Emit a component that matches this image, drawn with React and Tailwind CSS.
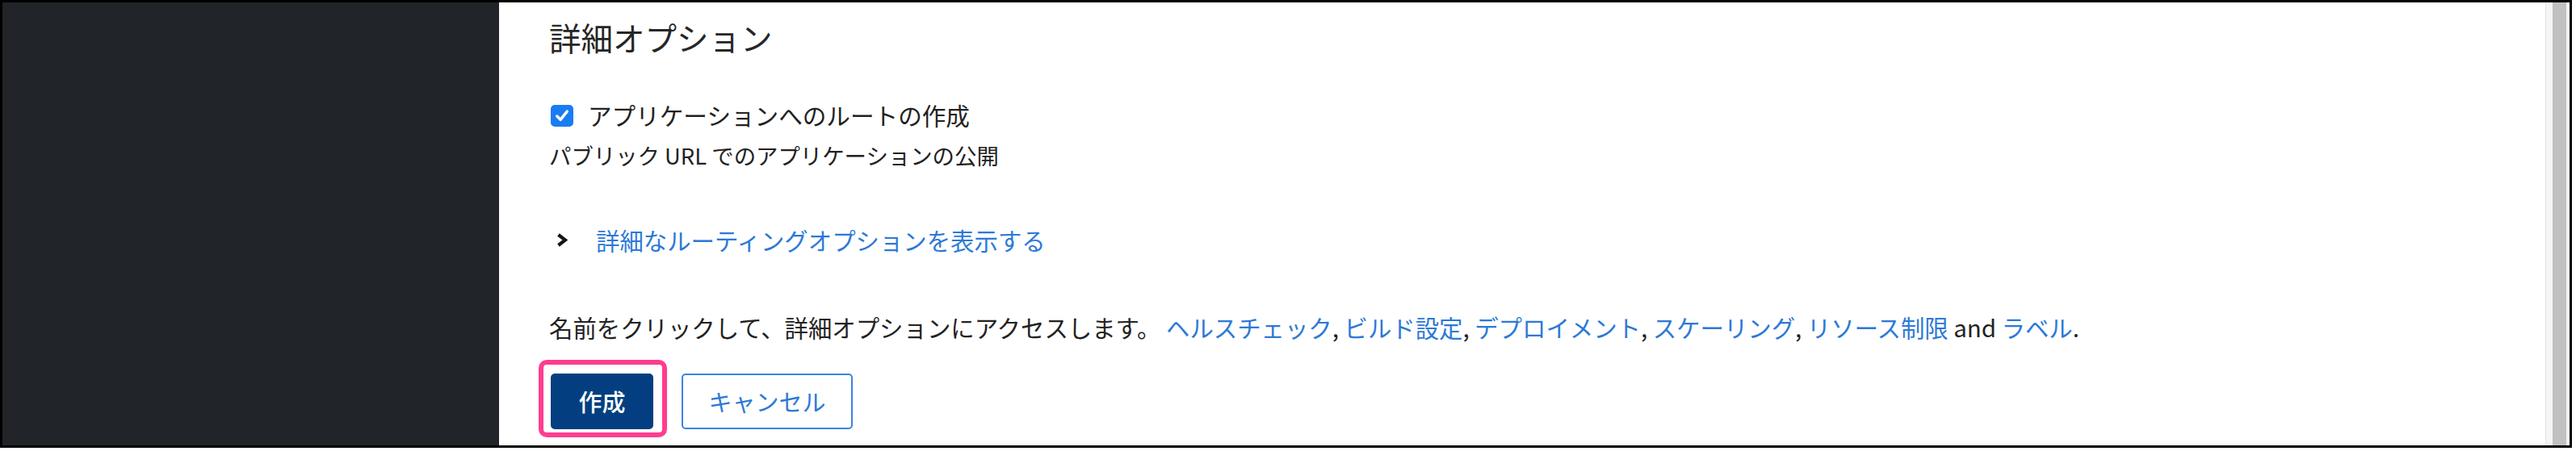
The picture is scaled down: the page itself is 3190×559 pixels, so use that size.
import React from 'react';

const font = { fontFamily: '"Noto Sans CJK JP", "Noto Sans", sans-serif' };

const Check = () => (
  <span className="flex h-[27px] w-[28px] items-center justify-center rounded-[5px] bg-[#1a7cf3]">
    <svg viewBox="0 0 28 28" className="h-[27px] w-[28px]">
      <polyline points="7.5,14.5 12,19 20.5,8.5" fill="none" stroke="#fff" strokeWidth="3.6" strokeLinecap="round" strokeLinejoin="round" />
    </svg>
  </span>
);

const Chevron = () => (
  <svg viewBox="0 0 14 17" className="h-[17px] w-[14px]">
    <polyline points="2.5,2 11,8.5 2.5,15" fill="none" stroke="#151515" strokeWidth="4.2" strokeLinejoin="miter" />
  </svg>
);

const links = ['ヘルスチェック', 'ビルド設定', 'デプロイメント', 'スケーリング'];

const App = () => {
  return (
    <div className="h-[559px] w-[3190px] bg-white" style={font}>
      <div className="flex h-[555px] w-[3185px] overflow-hidden border-[3px] border-black">
        <div className="w-[615px] shrink-0 bg-[#212428]" />

        <div className="flex-1 pl-[62px] pt-[19px] text-[#222]">
          <h2 className="text-[39.5px] leading-[47px] text-[#262626]">詳細オプション</h2>

          <div className="mt-[56px] flex items-center gap-[18px] pl-[2px]">
            <Check />
            <span className="text-[29.6px] leading-[36px]">アプリケーションへのルートの作成</span>
          </div>
          <p className="mt-[14px] text-[27.4px] leading-[34px]">パブリック URL でのアプリケーションの公開</p>

          <div className="mt-[70px] flex items-center pl-[9px]">
            <Chevron />
            <a className="ml-[35px] text-[29.4px] leading-[36px] text-[#2c79d6]">詳細なルーティングオプションを表示する</a>
          </div>

          <p className="mt-[72px] text-[29.4px] leading-[36px]">
            名前をクリックして、詳細オプションにアクセスします。{' '}
            {links.map((l) => (
              <React.Fragment key={l}>
                <a className="text-[#2c79d6]">{l}</a>,{' '}
              </React.Fragment>
            ))}
            <a className="text-[#2c79d6]">リソース制限</a> and <a className="text-[#2c79d6]">ラベル</a>.
          </p>

          <div className="mt-[40px] flex items-center gap-[35px] pl-[2px]">
            <span className="relative">
              <span className="absolute -bottom-[10px] -left-[15px] -right-[17px] -top-[17px] rounded-[10px] border-[6px] border-[#ff3d8f]" />
              <button className="h-[69px] w-[127px] rounded-[5px] bg-[#033f80] text-[29px] font-medium text-white">作成</button>
            </span>
            <button className="h-[69px] w-[212px] rounded-[5px] border-2 border-[#3a84e0] bg-white text-[29px] text-[#2c79d6]">キャンセル</button>
          </div>
        </div>

        <div className="w-[30px] shrink-0 border-l border-[#e4e4e4] bg-[#f5f5f5] pl-[8px] pr-[4px]">
          <div className="h-full w-[17px] bg-[#c1c1c1]" />
        </div>
      </div>
    </div>
  );
};

export default App;
